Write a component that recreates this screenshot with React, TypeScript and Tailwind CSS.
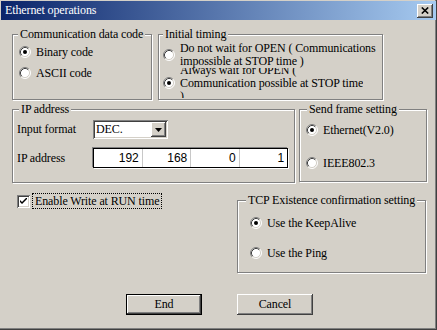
import React from "react";

function Radio({ checked }: { checked?: boolean }) {
  return (
    <svg width="12" height="12" viewBox="0 0 12 12" className="shrink-0">
      <circle cx="6" cy="6" r="5" fill="#fff" />
      <path d="M9.89 2.11 A5.5 5.5 0 0 0 2.11 9.89" fill="none" stroke="#808080" strokeWidth="1" />
      <path d="M9.89 2.11 A5.5 5.5 0 0 1 2.11 9.89" fill="none" stroke="#ffffff" strokeWidth="1" />
      <path d="M9.18 2.82 A4.5 4.5 0 0 0 2.82 9.18" fill="none" stroke="#404040" strokeWidth="1" />
      <path d="M9.18 2.82 A4.5 4.5 0 0 1 2.82 9.18" fill="none" stroke="#d4d0c8" strokeWidth="1" />
      {checked && <circle cx="6" cy="6" r="2" fill="#000" />}
    </svg>
  );
}

function Group({
  label,
  labelClass,
  className,
  children,
}: {
  label: string;
  labelClass: string;
  className: string;
  children: React.ReactNode;
}) {
  return (
    <div
      className={`relative border border-[#808080] shadow-[inset_1px_1px_0_#fff,1px_1px_0_#fff] ${className}`}
    >
      <span className={`absolute top-[-8px] bg-[#d4d0c8] px-[2px] leading-[14px] whitespace-nowrap ${labelClass}`}>
        {label}
      </span>
      {children}
    </div>
  );
}

function RadioRow({ checked, label }: { checked?: boolean; label: string }) {
  return (
    <div className="flex h-[14px] items-center gap-[5px] whitespace-nowrap">
      <Radio checked={checked} />
      <span>{label}</span>
    </div>
  );
}

const raised =
  "shadow-[inset_-1px_-1px_0_#404040,inset_1px_1px_0_#fff,inset_-2px_-2px_0_#808080,inset_2px_2px_0_#d4d0c8]";

export default function App() {
  return (
    <div className="relative h-[330px] w-[437px] overflow-hidden bg-[#d4d0c8] px-[1px] pt-[1px] [font-family:'Liberation_Serif',serif] text-[12px] leading-[13px] tracking-[-0.12px] text-black shadow-[inset_-1px_-1px_0_#404040,inset_-2px_-2px_0_#808080]">
      {/* Title bar */}
      <div className="flex h-[19px] items-center bg-[linear-gradient(to_right,#0a246a,#a6caf0)] pl-[4px] pr-[3px] text-white">
        <span className="text-[12px]">Ethernet operations</span>
        <div
          className={`ml-auto flex h-[14px] w-[16px] items-center justify-center bg-[#d4d0c8] ${raised}`}
        >
          <svg width="8" height="7" viewBox="0 0 8 7">
            <path d="M0.8 0.5 L7.2 6.5 M7.2 0.5 L0.8 6.5" stroke="#000" strokeWidth="1.6" />
          </svg>
        </div>
      </div>

      {/* Row 1 */}
      <div className="mt-[14px] flex gap-[6px] pl-[11px]">
        <Group label="Communication data code" labelClass="left-[5px]" className="h-[66px] w-[140px]">
          <div className="flex flex-col gap-[7px] pl-[6px] pt-[10px]">
            <RadioRow checked label="Binary code" />
            <RadioRow label="ASCII code" />
          </div>
        </Group>
        <Group label="Initial timing" labelClass="left-[4px]" className="h-[66px] w-[225px]">
          <div className="flex flex-col pl-[4px] pt-[7px]">
            <div className="flex items-center gap-[5px] whitespace-nowrap">
              <Radio />
              <div className="flex flex-col">
                <span>Do not wait for OPEN ( Communications</span>
                <span>impossible at STOP time )</span>
              </div>
            </div>
            <div className="flex h-[30px] items-center gap-[5px] whitespace-nowrap">
              <Radio checked />
              <div className="flex h-[30px] flex-col justify-center overflow-hidden">
                <span className="shrink-0">Always wait for OPEN (</span>
                <span className="shrink-0">Communication possible at STOP time</span>
                <span className="shrink-0">)</span>
              </div>
            </div>
          </div>
        </Group>
      </div>

      {/* Row 2 */}
      <div className="mt-[9px] flex gap-[4px] pl-[11px]">
        <Group label="IP address" labelClass="left-[6px]" className="h-[74px] w-[283px]">
          <div className="flex flex-col gap-[9px] pl-[4px] pt-[10px]">
            <div className="flex h-[19px] items-center">
              <span className="w-[76px]">Input format</span>
              <div className="flex h-[19px] w-[75px] items-center bg-white p-[2px] shadow-[inset_1px_1px_0_#808080,inset_-1px_-1px_0_#fff,inset_2px_2px_0_#404040,inset_-2px_-2px_0_#d4d0c8]">
                <span className="flex-1 pl-[1px]">DEC.</span>
                <div className={`flex h-[15px] w-[15px] items-center justify-center bg-[#d4d0c8] ${raised}`}>
                  <svg width="7" height="4" viewBox="0 0 7 4">
                    <path d="M0 0 H7 L3.5 4 Z" fill="#000" />
                  </svg>
                </div>
              </div>
            </div>
            <div className="flex h-[20px] items-center">
              <span className="w-[76px]">IP address</span>
              <div className="flex h-[20px] w-[195px] border border-black bg-white [font-family:'Liberation_Sans',sans-serif] shadow-[-1px_-1px_0_#808080,1px_1px_0_#fff]">
                <div className="flex flex-1 items-center justify-end border-r border-[#c8c8c8] pr-[3px]">192</div>
                <div className="flex flex-1 items-center justify-end border-r border-[#c8c8c8] pr-[3px]">168</div>
                <div className="flex flex-1 items-center justify-end border-r border-[#c8c8c8] pr-[3px]">0</div>
                <div className="flex flex-1 items-center justify-end pr-[3px]">1</div>
              </div>
            </div>
          </div>
        </Group>
        <Group label="Send frame setting" labelClass="left-[7px]" className="h-[73px] w-[128px]">
          <div className="flex flex-col gap-[19px] pl-[6px] pt-[13px]">
            <RadioRow checked label="Ethernet(V2.0)" />
            <RadioRow label="IEEE802.3" />
          </div>
        </Group>
      </div>

      {/* Row 3 */}
      <div className="mt-[10px] flex pl-[11px]">
        <div className="w-[225px] pl-[5px]">
          <div className="flex h-[16px] items-center gap-[2px]">
            <div className="flex h-[13px] w-[13px] items-center justify-center bg-white shadow-[inset_1px_1px_0_#808080,inset_-1px_-1px_0_#fff,inset_2px_2px_0_#404040,inset_-2px_-2px_0_#d4d0c8]">
              <svg width="7" height="7" viewBox="0 0 7 7">
                <path d="M0 2 L0 4 L2 6 L7 1 L7 -1 L2 4 Z" fill="#000" />
              </svg>
            </div>
            <span className="flex h-[16px] items-center border border-dotted border-black px-[2px] whitespace-nowrap">
              Enable Write at RUN time
            </span>
          </div>
        </div>
        <Group
          label="TCP Existence confirmation setting"
          labelClass="left-[8px]"
          className="mt-[7px] h-[73px] w-[189px]"
        >
          <div className="flex flex-col gap-[16px] pl-[12px] pt-[15px]">
            <RadioRow checked label="Use the KeepAlive" />
            <RadioRow label="Use the Ping" />
          </div>
        </Group>
      </div>

      {/* Row 4 */}
      <div className="mt-[21px] flex gap-[35px] pl-[125px]">
        <div className="h-[21px] w-[76px] border border-black">
          <div className={`flex h-full w-full items-center justify-center bg-[#d4d0c8] ${raised}`}>End</div>
        </div>
        <div className={`flex h-[21px] w-[76px] items-center justify-center bg-[#d4d0c8] ${raised}`}>
          Cancel
        </div>
      </div>
    </div>
  );
}
